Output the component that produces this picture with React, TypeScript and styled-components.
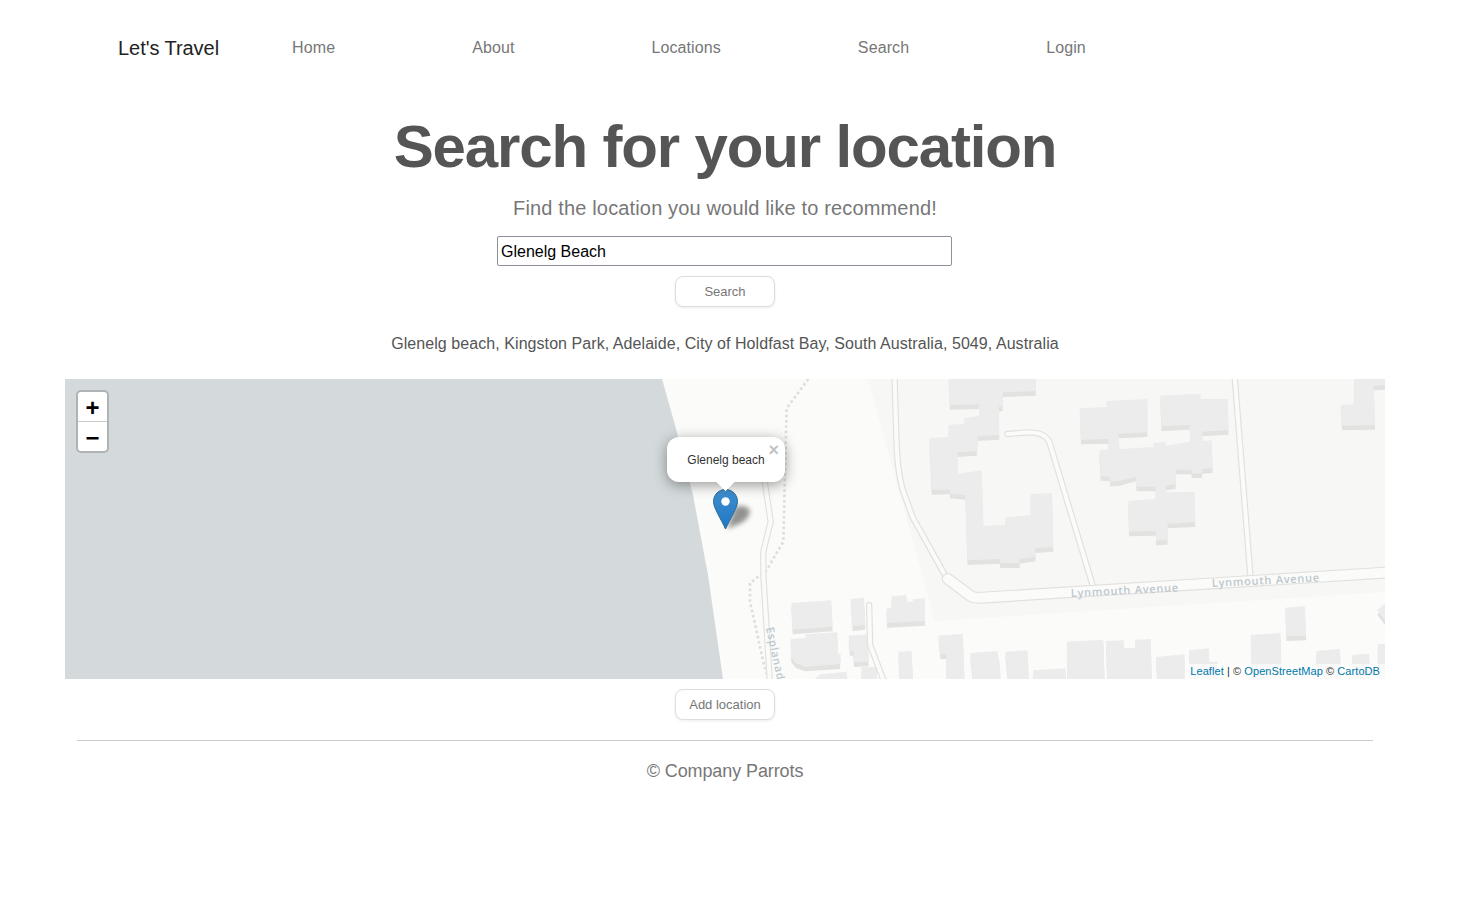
import React from 'react';
import styled, { createGlobalStyle } from 'styled-components';

const Global = createGlobalStyle`
  html, body {
    margin: 0;
    padding: 0;
    background: #fff;
    font-family: "Liberation Sans", Arial, sans-serif;
  }
`;

const Page = styled.div`
  width: 1450px;
  box-sizing: border-box;
  padding: 0 65px;
  min-height: 909px;
  text-align: center;
`;

const Nav = styled.nav`
  display: flex;
  align-items: center;
  height: 95px;
  padding-left: 53px;
`;

const Brand = styled.a`
  font-size: 20px;
  line-height: 26px;
  padding-top: 1px;
  color: #222;
  margin-right: 73px;
  letter-spacing: -0.05px;
`;

const NavLinks = styled.ul`
  display: flex;
  gap: 137px;
  list-style: none;
  margin: 0;
  padding: 0;
`;

const NavLink = styled.li`
  font-size: 16px;
  letter-spacing: 0.1px;
  color: #777;
`;

const Title = styled.h1`
  margin: 14px 0 0;
  font-size: 60px;
  line-height: 76px;
  font-weight: 700;
  letter-spacing: -1.15px;
  color: #555;
`;

const Lead = styled.p`
  margin: 11px 0 0;
  font-size: 20px;
  line-height: 24px;
  letter-spacing: 0.15px;
  color: #777;
`;

const SearchInput = styled.input`
  display: block;
  box-sizing: border-box;
  width: 455px;
  height: 30px;
  margin: 16px 0 0 432px;
  padding: 1px 3px 0;
  border: 1px solid #8f8f9d;
  border-radius: 2px;
  font-family: inherit;
  font-size: 16px;
  color: #000;
`;

const Button = styled.button<{ $top: number }>`
  display: block;
  box-sizing: border-box;
  width: 100px;
  height: 31px;
  margin: ${(p) => p.$top}px auto 0;
  padding: 0;
  background: #fff;
  border: 1px solid #ddd;
  border-radius: 8px;
  box-shadow: 0 1px 3px rgba(0, 0, 0, 0.08);
  font-family: inherit;
  font-size: 13px;
  color: #777;
`;

const Address = styled.p`
  margin: 27px 0 0;
  font-size: 16px;
  line-height: 20px;
  letter-spacing: 0.065px;
  color: #555;
`;

const MapBox = styled.div`
  position: relative;
  height: 300px;
  margin-top: 25px;
  background: #fbfbf9;
  overflow: hidden;
`;

const MapArt = styled.svg`
  display: block;
  width: 1320px;
  height: 300px;
`;

const Zoom = styled.div`
  position: absolute;
  left: 11px;
  top: 11px;
  width: 33px;
  border: 2px solid #b0b3b4;
  border-radius: 5px;
  box-sizing: border-box;
  background: #fff;
`;

const ZoomButton = styled.div`
  height: 29px;
  line-height: 32px;
  font-family: "Liberation Sans", sans-serif;
  font-size: 24px;
  font-weight: 700;
  color: #000;
  & + & {
    border-top: 1px solid #ccc;
  }
`;

const Marker = styled.svg`
  position: absolute;
  left: 648px;
  top: 110px;
`;

const Popup = styled.div`
  position: absolute;
  left: 602px;
  top: 58px;
  width: 118px;
  height: 45px;
  background: #fff;
  border-radius: 12px;
  box-shadow: 0 3px 14px rgba(0, 0, 0, 0.4);
  font-size: 12px;
  line-height: 46px;
  color: #333;
  &::after {
    content: "";
    position: absolute;
    left: 50px;
    top: 34px;
    width: 17px;
    height: 17px;
    background: #fff;
    transform: rotate(45deg);
    clip-path: polygon(0 100%, 100% 0, 100% 100%);
  }
`;

const PopupClose = styled.span`
  position: absolute;
  right: 6px;
  top: 5px;
  font-size: 18px;
  line-height: 16px;
  font-weight: 700;
  color: #c3c3c3;
`;

const Attribution = styled.div`
  position: absolute;
  right: 0;
  bottom: 0;
  padding: 0 5px;
  background: rgba(255, 255, 255, 0.7);
  font-size: 11px;
  line-height: 15px;
  letter-spacing: 0.07px;
  color: #333;
  a {
    color: #0078a8;
  }
`;

const Rule = styled.hr`
  margin: 20px 12px 0;
  border: 0;
  border-top: 1px solid #ccc;
`;

const Footer = styled.footer`
  margin-top: 20px;
  font-size: 18px;
  line-height: 20px;
  letter-spacing: -0.1px;
  color: #777;
`;

const LabelText = styled.text`
  font-family: "Open Sans", sans-serif;
  font-size: 11px;
  font-weight: 600;
  letter-spacing: 0.75px;
  fill: #bec8ce;
`;

// building outlines, traced from the zoomed crops
const rightBlocks = [
  '262,0 520,0 520,48 422,52 422,95 410,95 412,180 348,184 346,228 288,232 290,296 360,286 365,452 430,450 430,428 505,420 505,358 568,354 572,516 518,520 520,545 472,552 472,565 415,565 414,552 318,556 312,360 266,356 266,344 212,345 205,190 262,186 262,150 308,146 308,128 352,124 352,88 266,90',
  '650,100 730,96 730,78 850,72 850,172 765,176 768,222 868,216 868,204 905,202 905,212 976,200 976,150 892,154 888,62 1008,56 1008,72 1088,72 1090,165 1012,170 1014,198 1040,196 1044,280 1012,282 1012,295 982,295 980,284 934,284 934,328 905,332 905,352 990,350 992,442 910,446 910,495 876,497 876,468 796,470 794,378 875,372 875,335 818,335 816,305 768,318 740,320 740,305 712,303 708,226 735,224 735,192 654,194',
  '1462,0 1462,88 1422,90 1426,152 1524,150 1520,32 1553,30 1553,0',
  '78,700 92,698 94,664 136,660 140,680 156,680 158,672 192,670 192,738 80,744',
  '232,782 304,776 310,930 255,930 255,838 238,838',
  '326,834 406,828 414,868 416,930 336,930',
  '430,830 496,826 500,930 440,930 436,895',
  '512,886 608,880 610,930 512,930',
  '612,800 720,794 724,930 614,930',
  '728,798 780,796 782,820 814,818 814,794 860,792 864,930 732,930',
  '876,846 960,838 960,930 880,930',
  '974,826 1032,820 1034,860 1058,860 1058,930 976,930',
  '1156,780 1244,774 1248,930 1160,930',
  '1258,698 1316,694 1320,782 1262,784',
  '1350,828 1420,822 1424,930 1352,930',
  '1456,840 1506,836 1510,930 1458,930',
  '1532,808 1560,806 1560,930 1532,930',
  '1530,705 1560,680 1560,745',
];

const beachBlocks = [
  '424,684 544,676 548,755 428,764',
  '602,672 642,668 646,750 608,754',
  '422,792 466,790 466,778 562,772 564,836 572,836 570,868 466,875 438,865 424,848',
  '596,782 654,778 656,860 612,862 610,828 600,828',
  '634,876 680,876 682,930 636,930',
  '745,830 785,828 790,930 750,930',
  '478,930 510,898 590,890 594,930',
];

const Blocks = ({ items }: { items: string[] }) => (
  <>
    {items.map((points) => (
      <g key={points}>
        <polygon points={points} fill="#e2e2e0" transform="translate(0 14)" />
        <polygon points={points} fill="#ececec" />
      </g>
    ))}
  </>
);

const Road = ({ d, width }: { d: string; width: number }) => (
  <>
    <path d={d} fill="none" stroke="#e1e1df" strokeWidth={width} strokeLinecap="round" strokeLinejoin="round" />
    <path d={d} fill="none" stroke="#fbfbf9" strokeWidth={width - 7} strokeLinecap="round" strokeLinejoin="round" />
  </>
);

const MapDrawing = () => (
  <MapArt viewBox="65 379 1320 300">
    <polygon points="868,379 935,621 1385,592 1385,379" fill="#f7f7f6" />
    <polygon points="65,379 662,379 675,425 693,495 708,575 723,679 65,679" fill="#d4dadc" />
    <g transform="translate(650 375) scale(0.3333)">
      <path
        d="M475,12 L410,100 L405,300 L400,500 L350,585 L300,625 L300,680 L340,860 L360,930"
        fill="none"
        stroke="#dededc"
        strokeWidth="8"
        strokeDasharray="8 8"
      />
      <Road d="M345,325 L362,440 L340,530 L340,600 L350,760 L360,930" width={19} />
      <Blocks items={beachBlocks} />
    </g>
    <g transform="translate(860 375) scale(0.338 0.3333)">
      <Road d="M102,0 L108,200 Q110,280 125,340 L155,425 L254,605" width={19} />
      <Road d="M436,177 L500,172 Q545,172 560,200 L688,630" width={19} />
      <Road d="M1108,0 L1155,602" width={19} />
      <Road d="M27,690 L30,810 L75,930" width={19} />
      <Road d="M260,612 L330,665 Q345,670 360,668 L1570,592" width={36} />
      <Blocks items={rightBlocks} />
    </g>
    <LabelText transform="translate(1071 597) rotate(-3)">Lynmouth Avenue</LabelText>
    <LabelText transform="translate(1212 587) rotate(-3)">Lynmouth Avenue</LabelText>
    <LabelText transform="translate(766 628) rotate(78)">Esplanade</LabelText>
  </MapArt>
);

const MarkerIcon = () => (
  <Marker width="48" height="44" viewBox="0 0 48 44">
    <defs>
      <linearGradient id="pin" x1="0" y1="0" x2="0" y2="1">
        <stop offset="0" stopColor="#3f8fce" />
        <stop offset="1" stopColor="#1f77c7" />
      </linearGradient>
      <filter id="blur" x="-40%" y="-40%" width="180%" height="180%">
        <feGaussianBlur stdDeviation="2.4" />
      </filter>
    </defs>
    <path d="M14 40 L22 18 Q34 15 37 22 Q36 30 28 34 Z" fill="#000" opacity="0.42" filter="url(#blur)" />
    <path
      d="M12.5 0.5 C5.5 0.5 0.5 6 0.5 12.5 C0.5 19 8 30 12.5 40 C17 30 24.5 19 24.5 12.5 C24.5 6 19.5 0.5 12.5 0.5 Z"
      fill="url(#pin)"
      stroke="#2e6c97"
      strokeWidth="1"
    />
    <circle cx="12.5" cy="12.5" r="4.2" fill="#fff" />
  </Marker>
);

const App = () => (
  <Page>
    <Global />
    <Nav>
      <Brand>Let's Travel</Brand>
      <NavLinks>
        <NavLink>Home</NavLink>
        <NavLink>About</NavLink>
        <NavLink>Locations</NavLink>
        <NavLink>Search</NavLink>
        <NavLink>Login</NavLink>
      </NavLinks>
    </Nav>
    <Title>Search for your location</Title>
    <Lead>Find the location you would like to recommend!</Lead>
    <SearchInput defaultValue="Glenelg Beach" />
    <Button $top={10}>Search</Button>
    <Address>Glenelg beach, Kingston Park, Adelaide, City of Holdfast Bay, South Australia, 5049, Australia</Address>
    <MapBox>
      <MapDrawing />
      <Zoom>
        <ZoomButton>+</ZoomButton>
        <ZoomButton>−</ZoomButton>
      </Zoom>
      <MarkerIcon />
      <Popup>
        Glenelg beach
        <PopupClose>×</PopupClose>
      </Popup>
      <Attribution>
        <a>Leaflet</a> | © <a>OpenStreetMap</a> © <a>CartoDB</a>
      </Attribution>
    </MapBox>
    <Button $top={10}>Add location</Button>
    <Rule />
    <Footer>© Company Parrots</Footer>
  </Page>
);

export default App;
